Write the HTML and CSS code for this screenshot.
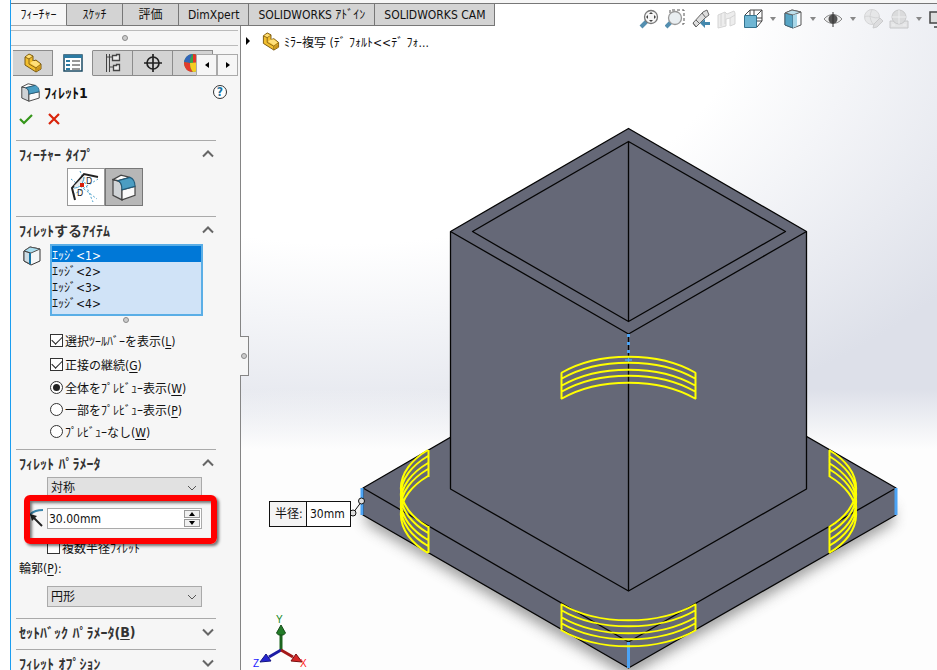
FILE: index.html
```html
<!DOCTYPE html>
<html lang="ja">
<head>
<meta charset="utf-8">
<title>ﾌｨﾚｯﾄ1</title>
<link rel="stylesheet" href="styles.css">
</head>
<body>
<svg class="defs" aria-hidden="true">
  <symbol id="part" viewBox="0 0 20 20">
    <path d="M2 4l4-3 4 2v5l3-1 5 4v5l-5 3L2 12z" fill="#f2bf2e" stroke="#7a5a12" stroke-width="1"/>
    <path d="M2 4l4 2 4-3M6 6v5l7 4 5-4M13 15v4" fill="none" stroke="#8b6716" stroke-width="1"/>
    <path d="M3 3.800l3-2 3 1.500-3 2zM7 10l3-2 3 0 4 3-4 3z" fill="#ffe07a"/>
    <path d="M14 15.500l3.500-3V16L14 18z" fill="#c9921a"/>
  </symbol>
  <symbol id="fillet" viewBox="0 0 24 24">
    <path d="M1 5v14l9 4v-9c0-4-1-7-4-8z" fill="#cfd3d6" stroke="#444" stroke-width="1.200"/>
    <path d="M10 14l13-3v8l-13 4z" fill="#fafafa" stroke="#444" stroke-width="1.200"/>
    <path d="M1 5l8-4 9 2L6 6z" fill="#fff" stroke="#444" stroke-width="1.200"/>
    <path d="M6 6l12-3c3 1 5 4 5 8l-13 3c0-4-1-7-4-8z" fill="#4b9dc2" stroke="#205c7c" stroke-width="1"/>
  </symbol>
</svg>
<div class="app">
  <nav class="ribbon">
    <button class="tab active">ﾌｨｰﾁｬｰ</button><button class="tab">ｽｹｯﾁ</button><button class="tab">評価</button><button class="tab">DimXpert</button><button class="tab">SOLIDWORKS ｱﾄﾞｲﾝ</button><button class="tab">SOLIDWORKS CAM</button>
  </nav>
  <aside class="panel">
    <div class="grip"><i class="dot"></i></div>
    <div class="ptabs">
      <button class="ptab" aria-label="ツリー"><svg width="20" height="20"><use href="#part"/></svg></button>
      <button class="ptab active" aria-label="プロパティ"><svg width="20" height="18" viewBox="0 0 20 18"><path d="M1 1h18v16H1z" fill="#fff" stroke="#1c4c66" stroke-width="1.500"/><path d="M1 1h18v3H1z" fill="#2c7ba3"/><path d="M3 6h4v2H3zM3 10h4v2H3zM3 14h4v2H3z" fill="#2c7ba3"/><path d="M9 7h8M9 11h8M9 15h8" stroke="#333"/></svg></button>
      <button class="ptab" aria-label="コンフィギュレーション"><svg width="16" height="20" viewBox="0 0 16 20" fill="#eee" stroke="#444"><path d="M1.500 1v18M4.500 1v18M1.500 4H8M4.500 14H8" fill="none"/><path d="M7.500 2.500h4v-1h3v6h-7zM8.500 12.500h3v-1h3v6h-6z" stroke-width="1.300"/></svg></button>
      <button class="ptab" aria-label="寸法"><svg width="20" height="20" viewBox="0 0 20 20" fill="none" stroke="#222" stroke-width="1.700"><circle cx="10" cy="10" r="6"/><path d="M10 1v18M1 10h18"/></svg></button>
      <button class="ptab" aria-label="外観"><svg width="20" height="20" viewBox="0 0 20 20"><circle cx="10" cy="10" r="9" fill="#3aa346"/><path d="M10 1C5 1 2 4 1 9l6 1c0-4 1-7 3-9z" fill="#3266b8"/><path d="M10 1c5 0 8 4 9 8l-9 1-3-1c0-3 1-6 3-8z" fill="#37a14a"/><path d="M10 1c5 0 8 4 9 8l-9 1z" fill="#e33429"/><path d="M1 9l6 1c0 4 1 7 3 9-6 0-9-4-9-10z" fill="#e23b2d"/><path d="M7 10l12-1c0 6-4 10-9 10-2-2-3-5-3-9z" fill="#f5cc20"/></svg></button>
      <div class="scroll"><button aria-label="前"><svg width="4" height="6"><path d="M4 0v6L0 3z"/></svg></button><button aria-label="次"><svg width="4" height="6"><path d="M0 0v6l4-3z"/></svg></button></div>
    </div>
    <header class="title">
      <svg width="19" height="19"><use href="#fillet"/></svg>
      <h1>ﾌｨﾚｯﾄ1</h1>
      <button class="help" aria-label="ヘルプ">?</button>
    </header>
    <div class="confirm">
      <button aria-label="OK"><svg width="14" height="12" viewBox="0 0 14 12"><path d="M1 6l4 4 8-8" fill="none" stroke="#35961a" stroke-width="2.200"/></svg></button>
      <button aria-label="キャンセル"><svg width="12" height="12" viewBox="0 0 12 12"><path d="M1 1l10 10M11 1L1 11" stroke="#d9240b" stroke-width="2.200"/></svg></button>
    </div>

    <section>
      <h2>ﾌｨｰﾁｬｰ ﾀｲﾌﾟ<svg class="chev" viewBox="0 0 12 8"><path d="M1 6.500l5-5 5 5"/></svg></h2>
      <div class="types">
        <button aria-label="非対称"><svg width="32" height="32" viewBox="0 0 32 32" fill="none"><path d="M1 8l26 20M10 0l13 31M3 24L28 8" stroke="#4aa0cb" stroke-dasharray="2 2"/><path d="M5 29L2 17 14 3l14 3" stroke="#222" stroke-width="2"/><path d="M5 16l10-10" stroke="#e8e8e8" stroke-width="3"/><path d="M4 17c5 0 9-3 10-11" stroke="#4aa0cb"/><path d="M10 12h4v4h-4z" fill="#d8200a"/><g fill="#222"><text x="16" y="13" class="dlabel">D</text><text x="7" y="25" class="dlabel">D</text></g></svg></button>
        <button class="on" aria-label="フィレット"><svg width="24" height="27" viewBox="0 0 24 24" preserveAspectRatio="none"><use href="#fillet"/></svg></button>
      </div>
    </section>

    <section class="edges">
      <h2>ﾌｨﾚｯﾄするｱｲﾃﾑ<svg class="chev" viewBox="0 0 12 8"><path d="M1 6.500l5-5 5 5"/></svg></h2>
      <div class="items">
        <svg width="18" height="20" viewBox="0 0 18 20"><path d="M1 5l6-4 10 2v12l-9 4-7-4z" fill="#f5f7f8" stroke="#333"/><path d="M1 5l6-4 10 2-9 4z" fill="#a9def0" stroke="#555"/><path d="M1 5l6 2v11l-6-3z" fill="#cddde5" stroke="#444"/><path d="M7 7v11" stroke="#1976a5" stroke-width="2"/></svg>
        <select size="4" aria-label="ﾌｨﾚｯﾄするｱｲﾃﾑ"><option selected>ｴｯｼﾞ&lt;1&gt;</option><option>ｴｯｼﾞ&lt;2&gt;</option><option>ｴｯｼﾞ&lt;3&gt;</option><option>ｴｯｼﾞ&lt;4&gt;</option></select>
      </div>
      <div class="resize"><i class="dot"></i></div>
      <label class="row tall"><input type="checkbox" checked><span>選択ﾂｰﾙﾊﾞｰを表示(<u>L</u>)</span></label>
      <label class="row tall"><input type="checkbox" checked><span>正接の継続(<u>G</u>)</span></label>
      <label class="row"><input type="radio" name="preview" checked><span>全体をﾌﾟﾚﾋﾞｭｰ表示(<u>W</u>)</span></label>
      <label class="row"><input type="radio" name="preview"><span>一部をﾌﾟﾚﾋﾞｭｰ表示(<u>P</u>)</span></label>
      <label class="row"><input type="radio" name="preview"><span>ﾌﾟﾚﾋﾞｭｰなし(<u>W</u>)</span></label>
    </section>

    <section class="params">
      <h2>ﾌｨﾚｯﾄ ﾊﾟﾗﾒｰﾀ<svg class="chev" viewBox="0 0 12 8"><path d="M1 6.500l5-5 5 5"/></svg></h2>
      <select class="drop" aria-label="方法"><option>対称</option></select>
      <div class="radius">
        <svg width="20" height="20" viewBox="0 0 20 20" fill="none"><path d="M1 19C2 8 8 2 19 2" stroke="#3a86ac" stroke-width="2"/><path d="M18 18L9 9" stroke="#222" stroke-width="2"/><path d="M6 6l7 2-5 5z" fill="#222"/></svg>
        <div class="spin"><input type="text" value="30.00mm" aria-label="半径"><div class="steps"><button aria-label="増"><svg width="6" height="4"><path d="M0 4l3-4 3 4z"/></svg></button><button aria-label="減"><svg width="6" height="4"><path d="M0 0h6L3 4z"/></svg></button></div></div>
        <div class="mark"></div>
      </div>
      <label class="row multi"><input type="checkbox"><span>複数半径ﾌｨﾚｯﾄ</span></label>
      <label class="caption" for="profile">輪郭(<u>P</u>):</label>
      <select class="drop" id="profile"><option>円形</option></select>
    </section>
    <section class="closed"><h2>ｾｯﾄﾊﾞｯｸ ﾊﾟﾗﾒｰﾀ(<u>B</u>)<svg class="chev" viewBox="0 0 12 8"><path d="M1 1.500l5 5 5-5"/></svg></h2></section>
    <section class="closed"><h2>ﾌｨﾚｯﾄ ｵﾌﾟｼｮﾝ<svg class="chev" viewBox="0 0 12 8"><path d="M1 1.500l5 5 5-5"/></svg></h2></section>
    <button class="flyout" aria-label="パネルを閉じる"><i class="dot"></i></button>
  </aside>

  <main class="view">
    <svg class="model" viewBox="241 0 696 670" preserveAspectRatio="xMidYMid slice">
      <defs><filter id="soft" x="-10%" y="-10%" width="120%" height="130%"><feGaussianBlur stdDeviation="7"/></filter></defs>
      <path d="M366 505L628 655 893 505v18L628 676 366 523z" fill="#555" opacity=".6" filter="url(#soft)"/>
      <g fill="#656877" stroke="#050505" stroke-width="1.300" stroke-linejoin="round">
        <path d="M628.500 334L363 488v27l265.500 153L896 515v-27z"/>
        <path d="M363 488l265.500 154L896 488" fill="none"/>
        <path d="M628.500 128.500l-178 103V489l178 102 178-102V231.500z"/>
        <path d="M450.500 231.500l178 102.500 178-102.500M628.500 334v257" fill="none"/>
        <path d="M628.500 141.500l-156 90 156 90 157-90zM628.500 141v180" fill="none"/>
      </g>
      <g stroke="#4ba3f5" stroke-width="3" fill="none">
        <path d="M362 488v27M896 488v27M628.500 642v26"/><path d="M628.500 334v24" stroke-dasharray="3 5"/><path d="M625 360h7M628.500 356v7" stroke-width="1.500"/>
      </g>
      <g stroke="#ff0" stroke-width="2" fill="none">
        <path d="M561 373a95 55 0 01135 0M561 379a95 55 0 01135 0M561 386a95 55 0 01135 0M561 392a95 55 0 01135 0M561 399a95 55 0 01135 0M561.500 373v26M695.500 373v26"/>
        <path d="M561 604a95 55 0 00135 0M561 610a95 55 0 00135 0M561 617a95 55 0 00135 0M561 623a95 55 0 00135 0M561 630a95 55 0 00135 0M561.500 604v27M695.500 604v27"/>
        <path d="M428 450a95 55 0 000 77M428 456a95 55 0 000 77M428 463a95 55 0 000 77M428 469a95 55 0 000 77M428 476a95 55 0 000 77M428.500 450v27M428.500 526v27"/>
        <path d="M829 450a95 55 0 010 77M829 456a95 55 0 010 77M829 463a95 55 0 010 77M829 469a95 55 0 010 77M829 476a95 55 0 010 77M829.500 450v27M829.500 526v27"/>
      </g>
      <g fill="#ddd" stroke="#111"><path d="M353 513l9-12"/><circle cx="353" cy="513" r="3"/><circle cx="361.500" cy="501" r="3"/></g>
    </svg>
    <div class="callout"><label for="rad">半径:</label><input id="rad" type="text" value="30mm"></div>
    <div class="crumb"><svg width="5" height="8"><path d="M0 0l4 4-4 4z"/></svg><svg width="20" height="19"><use href="#part"/></svg><span>ﾐﾗｰ複写 (ﾃﾞ ﾌｫﾙﾄ&lt;&lt;ﾃﾞ ﾌｫ...</span></div>
    <svg class="triad" viewBox="0 0 56 60" width="56" height="60">
      <path d="M29 39V21" stroke="#1c651e" stroke-width="3"/><path d="M24.500 22L29 14l4.500 8-2 2h-5z" fill="#227c28" stroke="#174c19"/>
      <path d="M29 39l-12 7" stroke="#1c1ca4" stroke-width="3"/><path d="M8 51l6-8 5 7z" fill="#2525d0" stroke="#151580"/>
      <path d="M29 39l12 7" stroke="#a41919" stroke-width="3"/><path d="M50 51l-6-8-5 7z" fill="#d52828" stroke="#7a1010"/>
      <text x="24" y="12" fill="#16881c">Y</text><text x="1" y="56" fill="#1b1bff">Z</text><text x="48" y="56" fill="#f22">X</text>
    </svg>
  </main>
  <div class="tools">
    <svg viewBox="0 0 20 20"><path d="M2 18l6-6" stroke="#548fb0" stroke-width="4"/><circle cx="12" cy="8" r="6.500" fill="#f6f6f6" stroke="#777" stroke-width="1.300"/><path d="M12 3l2 2h-4zM12 13l2-2h-4zM7 8l2-2v4zM17 8l-2-2v4z" fill="#444"/></svg>
    <svg viewBox="0 0 20 20"><path d="M5 4V1h14v14h-4" fill="none" stroke="#555" stroke-dasharray="3 2"/><path d="M1 18l5-5" stroke="#548fb0" stroke-width="4"/><circle cx="10" cy="9" r="6.500" fill="#e9eef1" stroke="#999" stroke-width="1.300"/></svg>
    <svg viewBox="0 0 20 20"><path d="M2 14L12 3l4-2 2 5-4 3-9 9z" fill="#ddd" stroke="#666"/><path d="M11 4l4 5M5 11l4 4M2 14l3 4" stroke="#666" fill="none"/><path d="M9 14l5-4v3h5v3h-5v3z" fill="#4489ae"/></svg>
    <svg viewBox="0 0 20 20" opacity=".5"><path d="M1 6l7-3 2 2 7-3 1 2v11l-5 2V9l-4 1v7l-8 2z" fill="#ddd" stroke="#aaa"/><path d="M8 3v12M4 5v12M13 9l5-3" stroke="#aaa"/></svg>
    <svg viewBox="0 0 20 20"><path d="M2 6l5-5h12v11l-5 6M14 6l5-5M7 1v5M19 12h-5M11 1v5M14 9h5" fill="none" stroke="#444"/><path d="M1.500 6.500h12v12h-12z" fill="#6fb6d3" stroke="#34738f"/></svg>
    <svg class="dd" viewBox="0 0 8 6"><path d="M1 1h6L4 5z"/></svg>
    <svg viewBox="0 0 20 20"><path d="M2 4l7-3 9 2v13l-8 3-8-3z" fill="#f5fafc" stroke="#555"/><path d="M2 4l8 2v13l-8-3z" fill="#57a5c5" stroke="#42677a"/><path d="M2 4l7-3 9 2-8 3z" fill="#bde0ec" stroke="#666"/><path d="M10 6l4-1v12l-4 2z" fill="#a8d7e8"/></svg>
    <svg class="dd" viewBox="0 0 8 6"><path d="M1 1h6L4 5z"/></svg>
    <svg viewBox="0 0 20 20"><path d="M1 10c5-6 13-6 18 0-5 6-13 6-18 0z" fill="#eee" stroke="#888"/><circle cx="10" cy="10" r="4.500" fill="#555"/><path d="M10 3v15" stroke="#333"/></svg>
    <svg class="dd" viewBox="0 0 8 6"><path d="M1 1h6L4 5z"/></svg>
    <svg viewBox="0 0 20 20" opacity=".55"><circle cx="9" cy="8" r="7.500" fill="#ddd" stroke="#bbb"/><path d="M2 8c4-3 10 3 14 0M9 1c-3 5-2 10 1 14" stroke="#bbb" fill="none"/><path d="M10 19l1-4 6-6 3 3-6 6z" fill="#ccc" stroke="#aaa"/></svg>
    <svg viewBox="0 0 20 20" opacity=".6"><path d="M1 12h18v7H1z" fill="#ddd" stroke="#aaa"/><circle cx="10" cy="8" r="7" fill="#ccc" stroke="#aaa"/><path d="M3 8h14M10 1v14M3 16h3M14 16h3" stroke="#eee"/></svg>
    <svg class="dd" viewBox="0 0 8 6"><path d="M1 1h6L4 5z"/></svg>
    <svg viewBox="0 0 20 20"><path d="M1 3h18v11H1z" fill="#ddd" stroke="#444" stroke-width="1.500"/><path d="M10 14v4M5 18h10" stroke="#444" stroke-width="1.500"/></svg>
  </div>
</div>
</body>
</html>
```
FILE: styles.css
```css
* { box-sizing: border-box; }
body, h1, h2 { margin: 0; }
body, button, input, select {
  font-family: "DejaVu Sans Condensed", "Noto Sans CJK JP", sans-serif;
  font-size: 12px;
  color: #111;
}
button { padding: 0; border: 0; background: none; }
u { text-underline-offset: 2px; }
.defs { position: absolute; width: 0; height: 0; }
.app {
  position: relative;
  display: grid;
  grid-template: 26px minmax(0, 1fr) / 241px minmax(0, 1fr);
  height: 100vh;
  overflow: hidden;
  background: #fff;
}

/* command tabs */
.ribbon {
  grid-area: 1 / 1 / 2 / -1;
  z-index: 1;
  display: flex;
  margin-left: 10px;
  padding-top: 3px;
  border-left: 1px solid #1a9df0;
  background: linear-gradient(#f6f6f6 3px, #777 3px, #777 4px, #fff0 4px);
}
.tab {
  min-width: 56px;
  padding: 0 9px;
  border: solid #777;
  border-width: 1px 1px 1px 0;
  background: #d3d3d3;
  line-height: 20px;
  white-space: nowrap;
}
.tab.active { background: #f6f6f6; border-bottom-color: #aaa; }

/* property panel */
.panel {
  grid-area: 2 / 1;
  position: relative;
  z-index: 1;
  margin-left: 10px;
  border-left: 1px solid #1a9df0;
  border-right: 1px solid #858585;
  background: #f6f6f6;
}
.dot {
  width: 6px;
  height: 6px;
  border: 1px solid #8a8a8a;
  border-radius: 50%;
  background: #ccc;
}
.grip {
  display: flex;
  align-items: center;
  justify-content: center;
  height: 16px;
  margin: 4px 2px 0 0;
  border: solid #bbb;
  border-width: 1px 0;
}
.ptabs { position: relative; display: flex; height: 26px; margin: 4px 2px 0; overflow: hidden; }
.ptab {
  display: grid;
  flex: 0 0 40px;
  place-items: center;
  border: 1px solid #8c8c8c;
  border-left: 0;
  background: #d3d3d3;
}
.ptab.active { background: #f6f6f6; border-color: #f6f6f6 #8c8c8c #f6f6f6 #f6f6f6; }
.scroll { position: absolute; right: 0; bottom: 0; display: flex; height: 22px; }
.scroll button { display: grid; place-items: center; width: 21px; border: 1px solid #aaa; background: #f6f6f6; }
.title { display: flex; align-items: center; height: 32px; padding: 0 13px 0 10px; gap: 4px; }
h1, h2 { font-size: 14px; font-weight: bold; }
h1 { flex: 1; }
.help {
  width: 14px;
  height: 14px;
  border: 1px solid #333;
  border-radius: 50%;
  background: #fff;
  color: #1974a3;
  font-weight: bold;
  line-height: 12px;
}
.confirm { display: flex; gap: 15px; height: 32px; padding: 2px 8px 0; align-items: start; }
.confirm button { height: 20px; }

section { width: 200px; margin-left: 5px; border-top: 1px solid #aaa; padding-bottom: 10px; }
h2 {
  display: flex;
  align-items: center;
  height: 27px;
  padding: 0 2px 2px 3px;
  color: #333;
  white-space: nowrap;
}
.chev { width: 12px; height: 8px; margin-left: auto; fill: none; stroke: #666; stroke-width: 2; }
.types { display: flex; height: 38px; margin-left: 51px; }
.types button { display: grid; place-items: center; width: 38px; border: 1px solid #999; background: #fff; }
.types .on { background: #b7b7b7; border-color: #777; }
.dlabel { font-size: 9px; }
.edges { padding-bottom: 7px; }
.items { display: flex; align-items: start; gap: 9px; margin: 0 -3px 0 7px; }
.items svg { margin-top: 2px; }
.items select {
  width: 153px;
  height: 72px;
  padding: 0;
  border: 2px solid #5aaee6;
  border-radius: 0;
  background: #d0e3f7;
  outline: 0;
  overflow: hidden;
}
.items option { height: 16px; min-height: 16px; padding: 0; line-height: 16px; }
.items option:checked { background: #0078d7 linear-gradient(#0078d7, #0078d7); color: #fff; }
.resize { display: flex; justify-content: center; height: 12px; padding: 1px 0 0 20px; }
.row { display: flex; align-items: center; gap: 2px; height: 22px; margin-left: 34px; white-space: nowrap; }
.row.tall { height: 24px; }
.row input {
  display: grid;
  place-items: center;
  width: 13px;
  height: 13px;
  margin: 0;
  border: 1px solid #333;
  background: #fff;
  appearance: none;
}
.row input[type="radio"] { border-radius: 50%; }
input[type="radio"]:checked::before { content: ""; width: 7px; height: 7px; border-radius: 50%; background: #222; }
input[type="checkbox"]:checked::before {
  content: "";
  width: 9px;
  height: 5px;
  margin-bottom: 2px;
  border: solid #222;
  border-width: 0 0 1px 1px;
  transform: rotate(-45deg);
}
.drop {
  display: block;
  width: 155px;
  height: 21px;
  margin-left: 31px;
  padding: 0 3px;
  border: 1px solid #aaa;
  border-radius: 0;
  appearance: none;
  background: #e1e1e1 url("data:image/svg+xml,%3Csvg xmlns='http://www.w3.org/2000/svg' width='10' height='6'%3E%3Cpath d='M1 1l4 4 4-4' fill='none' stroke='%23555'/%3E%3C/svg%3E") no-repeat right 4px center;
}
.radius { position: relative; display: flex; gap: 3px; padding: 10px 0 7px 8px; }
.spin { display: flex; width: 155px; height: 21px; border: 1px solid #aaa; background: #fff; }
.spin input { flex: 1; min-width: 0; padding: 0 1px; border: 0; background: none; outline: 0; }
.steps { display: flex; flex-direction: column; gap: 1px; width: 17px; padding: 1px 1px 1px 0; }
.steps button { display: grid; flex: 1; place-items: center; border: 1px solid #999; background: #f0f0f0; }
.mark {
  position: absolute;
  inset: -3px -1px -8px 8px;
  border: 6px solid #f00;
  border-radius: 6px;
  box-shadow: 2px 2px 3px #0008, inset 2px 2px 3px #0008;
}
.multi { margin-left: 31px; }
.caption { display: block; margin-left: 3px; padding-bottom: 6px; line-height: 22px; }
.params { padding-bottom: 11px; }
.closed { padding-bottom: 3px; }
.flyout {
  position: absolute;
  top: 310px;
  right: -9px;
  display: grid;
  place-items: center;
  width: 9px;
  height: 40px;
  border: 1px solid #858585;
  border-left: 0;
  background: #f6f6f6;
}

/* graphics area */
.view {
  grid-area: 1 / 2 / -1 / 3;
  position: relative;
  background:
    linear-gradient(#fff0 54%, #fff0 58%, #fdfdfd 67%),
    radial-gradient(ellipse 110% 70% at 15% 0, #fff 52%, #dde0e9 100%);
}
.model { display: block; width: 100%; height: 100%; position: absolute; }
.callout {
  position: absolute;
  top: 501px;
  left: 28px;
  display: flex;
  width: 82px;
  height: 26px;
  border: 1px solid #111;
  background: #fff;
  line-height: 24px;
}
.callout label { width: 37px; padding-left: 5px; border-right: 1px solid #111; background: #f4f4f4; }
.callout input { width: 43px; padding: 0 3px; border: 0; background: none; }
.crumb { position: absolute; top: 31px; left: 5px; display: flex; align-items: center; gap: 3px; height: 20px; white-space: nowrap; }
.crumb svg:first-child { margin-right: 7px; }
.triad { position: absolute; bottom: -1px; left: 11px; }
.triad text { font-family: "Liberation Sans", sans-serif; font-size: 10px; }
.tools { position: absolute; top: 9px; right: -12px; z-index: 2; display: flex; align-items: center; gap: 6px; }
.tools svg { width: 20px; height: 20px; }
.tools .dd { width: 8px; height: 6px; fill: #888; }
```
